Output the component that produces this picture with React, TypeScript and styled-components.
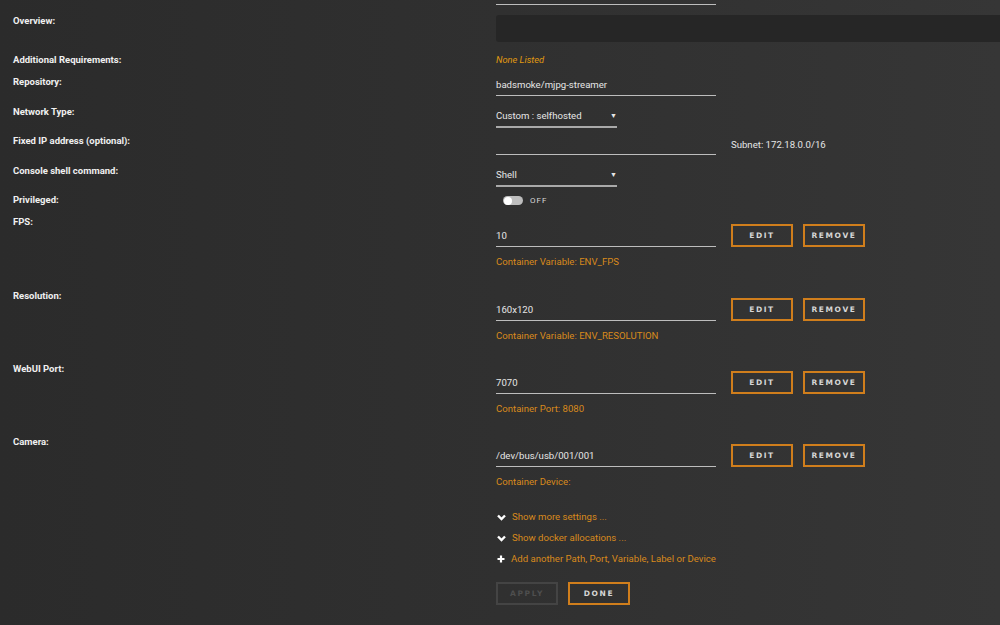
import React from 'react';
import styled, { createGlobalStyle } from 'styled-components';

const GlobalStyle = createGlobalStyle`
    html, body {
        margin: 0;
        padding: 0;
        background: #2f2f2f;
    }
    body {
        font-family: Roboto, 'Liberation Sans', sans-serif;
    }
`;

const orange = '#d88a1c';
const border = '#d07e1c';
const labelWidth = 483;

const Page = styled.div`
    width: 1000px;
    height: 625px;
    overflow: hidden;
    background: linear-gradient(90deg, #2b2b2b 0%, #303030 50%, #363636 100%);
    color: #e6e6e6;
    font-size: 9.6px;
    padding-left: 13px;
    box-sizing: border-box;
`;

const Stub = styled.div`
    margin-left: ${labelWidth}px;
    width: 220px;
    height: 4px;
    border-bottom: 1px solid #bdbdbd;
`;

const Spacer = styled.div`
    height: 10px;
`;

const Row = styled.div<{ $h: number }>`
    display: grid;
    grid-template-columns: ${labelWidth}px 1fr;
    height: ${(p) => p.$h}px;
`;

const Label = styled.div`
    font-weight: 700;
    font-size: 9.5px;
    line-height: 12px;
    color: #f0f0f0;
`;

const Content = styled.div<{ $top?: number }>`
    padding-top: ${(p) => p.$top ?? 0}px;
    display: flex;
    flex-direction: column;
    align-items: flex-start;
`;

const TextArea = styled.div`
    height: 27px;
    width: 520px;
    background: #262626;
    border-radius: 3px;
`;

const Notice = styled.div<{ $italic?: boolean }>`
    color: #e09a10;
    font-size: 9.3px;
    line-height: 12px;
    font-style: ${(p) => (p.$italic ? 'italic' : 'normal')};
`;

const Input = styled.div<{ $w?: number }>`
    width: ${(p) => p.$w ?? 220}px;
    line-height: 12px;
    height: 12px;
    padding-bottom: 4px;
    border-bottom: 1px solid #bdbdbd;
    white-space: nowrap;
`;

const Select = styled.div`
    width: 121px;
    line-height: 12px;
    height: 12px;
    padding-bottom: 4px;
    border-bottom: 2px solid #a9a9a9;
    display: flex;
    justify-content: space-between;
`;

const Arrow = styled.span`
    font-size: 7px;
`;

const Inline = styled.div`
    display: flex;
    align-items: flex-start;
    gap: 15px;
`;

const Hint = styled.div`
    line-height: 12px;
    padding-top: 1px;
`;

const ToggleRow = styled.div`
    display: flex;
    align-items: center;
    gap: 7px;
    padding-left: 7px;
`;

const Toggle = styled.div`
    width: 20px;
    height: 9px;
    border-radius: 5px;
    background: #bdbdbd;
    display: flex;
    align-items: center;
    padding-left: 1px;
    box-sizing: border-box;
`;

const Knob = styled.div`
    width: 8px;
    height: 8px;
    border-radius: 50%;
    background: #ffffff;
`;

const ToggleText = styled.span`
    font-size: 8px;
    letter-spacing: 1px;
    color: #d8d8d8;
`;

const Controls = styled.div`
    display: flex;
    align-items: center;
`;

const VarInput = styled.div`
    width: 220px;
    height: 12px;
    line-height: 12px;
    padding: 6px 0 4px;
    border-bottom: 1px solid #bdbdbd;
    margin-right: 15px;
`;

const Button = styled.button<{ $disabled?: boolean }>`
    width: 62px;
    height: 23px;
    box-sizing: border-box;
    background: transparent;
    border: 2px solid ${(p) => (p.$disabled ? '#444444' : border)};
    color: ${(p) => (p.$disabled ? '#4e4e4e' : '#d6d6d6')};
    font-family: 'DejaVu Sans', sans-serif;
    font-weight: 700;
    font-size: 7.5px;
    letter-spacing: 1.6px;
    padding: 0;
    margin-right: 10px;
    cursor: pointer;
`;

const SubNote = styled.div`
    color: ${orange};
    font-size: 9.6px;
    line-height: 12px;
    margin-top: 9px;
`;

const Links = styled.div`
    margin-left: ${labelWidth}px;
    padding-top: 2px;
    display: flex;
    flex-direction: column;
    gap: 9px;
`;

const LinkRow = styled.div`
    display: flex;
    align-items: center;
    gap: 6px;
    color: ${orange};
    font-size: 9.6px;
    line-height: 12px;
    padding-left: 1px;
`;

const Actions = styled.div`
    display: flex;
    margin-top: 8px;
`;

const Chevron = () => (
    <svg width="9" height="7" viewBox="0 0 9 7">
        <path d="M1 1.5 L4.5 5 L8 1.5" stroke="#ffffff" strokeWidth="2.4" fill="none" />
    </svg>
);

const Plus = () => (
    <svg width="8" height="8" viewBox="0 0 8 8">
        <path d="M4 0.5 V7.5 M0.5 4 H7.5" stroke="#ffffff" strokeWidth="2.2" fill="none" />
    </svg>
);

const variables = [
    { label: 'FPS:', value: '10', note: 'Container Variable: ENV_FPS', h: 74 },
    { label: 'Resolution:', value: '160x120', note: 'Container Variable: ENV_RESOLUTION', h: 73 },
    { label: 'WebUI Port:', value: '7070', note: 'Container Port: 8080', h: 73 },
    { label: 'Camera:', value: '/dev/bus/usb/001/001', note: 'Container Device:', h: 73 },
];

export default function App() {
    return (
        <>
            <GlobalStyle />
            <Page>
                <Stub />
                <Spacer />
                <Row $h={39}>
                    <Label>Overview:</Label>
                    <Content>
                        <TextArea />
                    </Content>
                </Row>
                <Row $h={22}>
                    <Label>Additional Requirements:</Label>
                    <Content>
                        <Notice $italic>None Listed</Notice>
                    </Content>
                </Row>
                <Row $h={30}>
                    <Label>Repository:</Label>
                    <Content $top={3}>
                        <Input>badsmoke/mjpg-streamer</Input>
                    </Content>
                </Row>
                <Row $h={29}>
                    <Label>Network Type:</Label>
                    <Content $top={4}>
                        <Select>
                            Custom : selfhosted<Arrow>▼</Arrow>
                        </Select>
                    </Content>
                </Row>
                <Row $h={30}>
                    <Label>Fixed IP address (optional):</Label>
                    <Content $top={3}>
                        <Inline>
                            <Input />
                            <Hint>Subnet: 172.18.0.0/16</Hint>
                        </Inline>
                    </Content>
                </Row>
                <Row $h={29}>
                    <Label>Console shell command:</Label>
                    <Content $top={4}>
                        <Select>
                            Shell<Arrow>▼</Arrow>
                        </Select>
                    </Content>
                </Row>
                <Row $h={22}>
                    <Label>Privileged:</Label>
                    <Content $top={2}>
                        <ToggleRow>
                            <Toggle>
                                <Knob />
                            </Toggle>
                            <ToggleText>OFF</ToggleText>
                        </ToggleRow>
                    </Content>
                </Row>
                {variables.map((v) => (
                    <Row key={v.label} $h={v.h}>
                        <Label>{v.label}</Label>
                        <Content $top={8}>
                            <Controls>
                                <VarInput>{v.value}</VarInput>
                                <Button>EDIT</Button>
                                <Button>REMOVE</Button>
                            </Controls>
                            <SubNote>{v.note}</SubNote>
                        </Content>
                    </Row>
                ))}
                <Links>
                    <LinkRow>
                        <Chevron />
                        Show more settings ...
                    </LinkRow>
                    <LinkRow>
                        <Chevron />
                        Show docker allocations ...
                    </LinkRow>
                    <LinkRow>
                        <Plus />
                        Add another Path, Port, Variable, Label or Device
                    </LinkRow>
                    <Actions>
                        <Button $disabled>APPLY</Button>
                        <Button>DONE</Button>
                    </Actions>
                </Links>
            </Page>
        </>
    );
}
